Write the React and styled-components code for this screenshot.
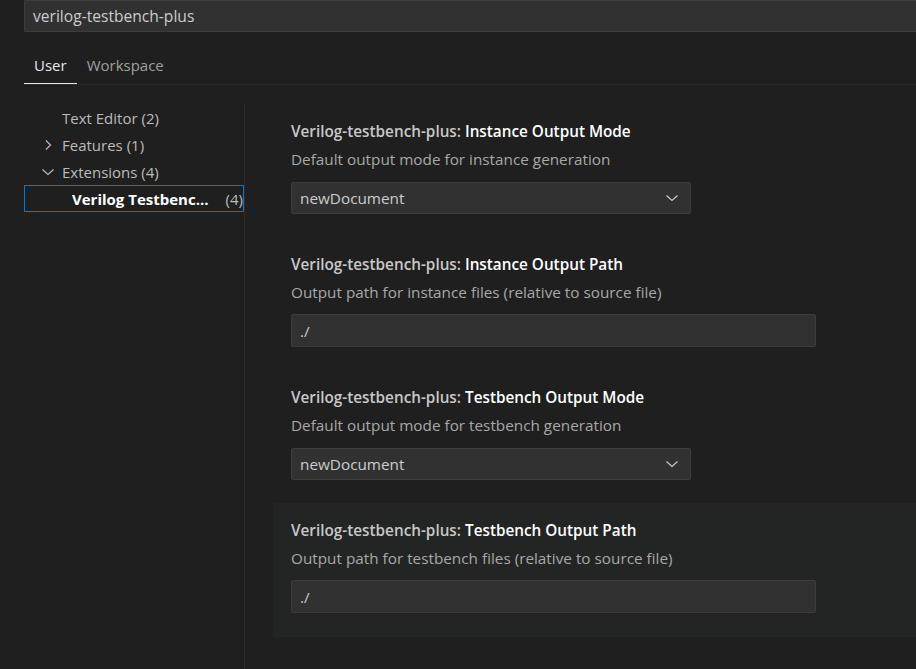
import React from 'react';
import styled, { createGlobalStyle } from 'styled-components';

const GlobalStyle = createGlobalStyle`
  html, body {
    margin: 0;
    padding: 0;
    background: #1f1f1f;
    height: 100%;
    overflow: hidden;
  }
  body {
    font-family: 'Open Sans', 'Noto Sans', sans-serif;
    font-size: 15.3px;
    color: #cccccc;
  }
`;

const Page = styled.div`
  width: 916px;
  height: 669px;
  background: #1f1f1f;
  display: flex;
  flex-direction: column;
  overflow: hidden;
`;

const Header = styled.div`
  padding-left: 24px;
`;

const SearchBox = styled.div`
  height: 30px;
  background: #313131;
  border: 1px solid #3c3c3c;
  border-right: none;
  border-radius: 2px 0 0 2px;
  display: flex;
  align-items: center;
  padding-left: 8px;
  color: #cccccc;
  font-size: 15.6px;
`;

const TabBar = styled.div`
  margin-top: 18px;
  display: flex;
  border-bottom: 1px solid #2b2b2b;
`;

const Tab = styled.div`
  height: 34px;
  padding: 5px 10px 0;
  line-height: 20px;
  box-sizing: border-box;
  font-size: 15px;
  color: ${p => (p.$active ? '#e7e7e7' : '#a0a0a0')};
  border-bottom: 1px solid ${p => (p.$active ? '#e7e7e7' : 'transparent')};
`;

const Body = styled.div`
  flex: 1;
  display: flex;
  padding-top: 19px;
  padding-left: 24px;
`;

const Sidebar = styled.div`
  width: 220px;
  border-right: 1px solid #2b2b2b;
  font-size: 15px;
`;

const TreeRow = styled.div`
  height: 27px;
  display: flex;
  align-items: center;
  box-sizing: border-box;
  padding-left: ${p => p.$indent}px;
  border: 1px solid ${p => (p.$selected ? '#0078d4' : 'transparent')};
  color: ${p => (p.$selected ? '#ffffff' : '#bbbbbb')};
  font-weight: ${p => (p.$selected ? 700 : 400)};
`;

const Twistie = styled.span`
  width: 22px;
  display: flex;
  align-items: center;
  color: #bbbbbb;
`;

const TreeLabel = styled.span`
  flex: 1;
  white-space: nowrap;
  overflow: hidden;
`;

const TreeCount = styled.span`
  color: #bbbbbb;
  font-weight: 400;
`;

const Content = styled.div`
  flex: 1;
  padding-left: 28px;
`;

const Item = styled.div`
  padding: 17px 18px ${p => (p.$focused ? 24 : 23)}px;
  background: ${p => (p.$focused ? '#232424' : 'transparent')};
`;

const Title = styled.div`
  height: 20px;
  line-height: 20px;
  font-weight: 600;
  color: #c8c8c8;
  white-space: nowrap;
`;

const Label = styled.span`
  color: #ffffff;
`;

const Description = styled.div`
  margin-top: 8px;
  height: 20px;
  line-height: 20px;
  color: #a8a8a8;
  white-space: nowrap;
`;

const Select = styled.div`
  margin-top: 13px;
  width: 400px;
  height: 32px;
  box-sizing: border-box;
  background: #313131;
  border: 1px solid #3c3c3c;
  border-radius: 2px;
  display: flex;
  align-items: center;
  justify-content: space-between;
  padding: 0 10px 0 8px;
  color: #cccccc;
`;

const TextInput = styled.div`
  margin-top: 12px;
  width: 525px;
  height: 33px;
  box-sizing: border-box;
  background: #313131;
  border: 1px solid #3c3c3c;
  border-radius: 2px;
  display: flex;
  align-items: center;
  padding-left: 8px;
  color: #cccccc;
`;

const ChevronRight = () => (
  <svg width="16" height="16" viewBox="0 0 16 16">
    <polyline points="6,3.5 10.5,8 6,12.5" fill="none" stroke="#bbbbbb" strokeWidth="1.2" />
  </svg>
);

const ChevronDown = ({ color = '#bbbbbb' }) => (
  <svg width="16" height="16" viewBox="0 0 16 16">
    <polyline points="2.5,5.5 8,10.5 13.5,5.5" fill="none" stroke={color} strokeWidth="1.2" />
  </svg>
);

const settings = [
  { label: 'Instance Output Mode', desc: 'Default output mode for instance generation', kind: 'select', value: 'newDocument' },
  { label: 'Instance Output Path', desc: 'Output path for instance files (relative to source file)', kind: 'text', value: './' },
  { label: 'Testbench Output Mode', desc: 'Default output mode for testbench generation', kind: 'select', value: 'newDocument' },
  { label: 'Testbench Output Path', desc: 'Output path for testbench files (relative to source file)', kind: 'text', value: './', focused: true },
];

export default function App() {
  return (
    <Page>
      <GlobalStyle />
      <Header>
        <SearchBox>verilog-testbench-plus</SearchBox>
        <TabBar>
          <Tab $active>User</Tab>
          <Tab>Workspace</Tab>
        </TabBar>
      </Header>
      <Body>
        <Sidebar>
          <TreeRow $indent={15}>
            <Twistie />
            <TreeLabel>Text Editor (2)</TreeLabel>
          </TreeRow>
          <TreeRow $indent={15}>
            <Twistie><ChevronRight /></Twistie>
            <TreeLabel>Features (1)</TreeLabel>
          </TreeRow>
          <TreeRow $indent={15}>
            <Twistie><ChevronDown /></Twistie>
            <TreeLabel>Extensions (4)</TreeLabel>
          </TreeRow>
          <TreeRow $indent={47} $selected>
            <TreeLabel>Verilog Testbenc...</TreeLabel>
            <TreeCount>(4)</TreeCount>
          </TreeRow>
        </Sidebar>
        <Content>
          {settings.map(s => (
            <Item key={s.label} $focused={s.focused}>
              <Title>
                Verilog-testbench-plus: <Label>{s.label}</Label>
              </Title>
              <Description>{s.desc}</Description>
              {s.kind === 'select' ? (
                <Select>
                  <span>{s.value}</span>
                  <ChevronDown color="#cccccc" />
                </Select>
              ) : (
                <TextInput>{s.value}</TextInput>
              )}
            </Item>
          ))}
        </Content>
      </Body>
    </Page>
  );
}
